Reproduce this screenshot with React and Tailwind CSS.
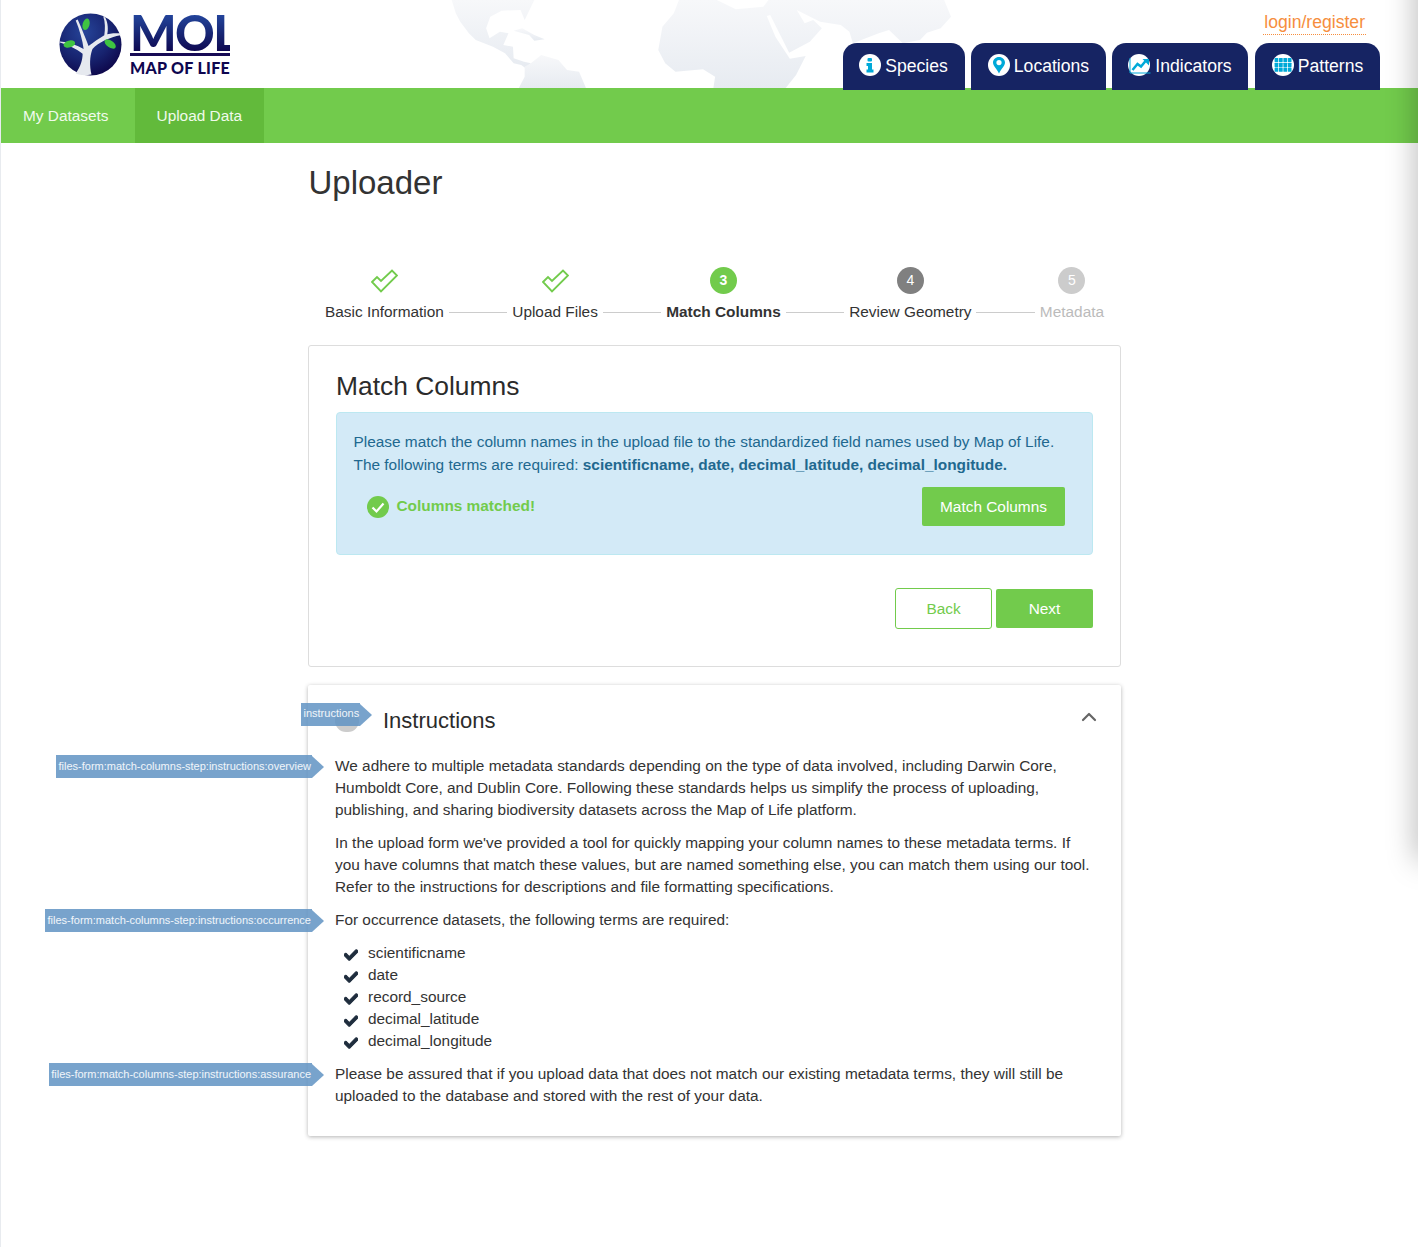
import { Fragment } from "react";
import { ChevronUp } from "lucide-react";
import { FaCheck } from "react-icons/fa";

function WorldMap() {
  return (
    <svg className="absolute left-[430px] top-0 h-[88px] w-[540px]" viewBox="0 0 1568 264" preserveAspectRatio="none">
      <defs>
        <linearGradient id="land" x1="0" y1="0" x2="0" y2="1">
          <stop offset="0" stopColor="#f7f8fa" />
          <stop offset="1" stopColor="#e7ebf1" />
        </linearGradient>
      </defs>
      <g fill="url(#land)">
        <path d="M60 0L72 40L85 65L110 100L130 120L180 140L215 160L240 190L262 195L275 205L290 190L270 185L240 175L238 140L210 135L225 100L200 95L170 115L160 85L172 50L205 32L260 30L272 60L300 0Z" />
        <path d="M240 92L265 85L300 105L330 118L300 122L285 105Z" />
        <path d="M255 264L272 230L272 200L290 190L320 165L370 180L395 210L430 215L450 264Z" />
        <path d="M720 0L705 40L672 80L660 150L680 190L710 215L790 208L825 230L820 264L1030 264L1060 225L1088 168L1042 176L1000 110L975 48L985 45L1040 158L1100 125L1135 85L1110 60L1085 70L1062 30L1130 65L1190 75L1215 95L1225 130L1300 100L1330 90L1370 130L1420 120L1440 98L1480 85L1510 50L1490 0L980 0L965 20L885 28L830 0Z" />
      </g>
    </svg>
  );
}

function Logo() {
  return (
    <div className="flex items-start gap-[8px]">
      <svg width="63" height="63" viewBox="0 0 64 63" className="shrink-0">
        <defs>
          <radialGradient id="globe" cx="0.4" cy="0.3" r="0.75">
            <stop offset="0" stopColor="#264499" />
            <stop offset="0.6" stopColor="#17236f" />
            <stop offset="1" stopColor="#0d0548" />
          </radialGradient>
        </defs>
        <circle cx="32" cy="31.500" r="31.500" fill="url(#globe)" />
        <path d="M17 61C22 54 24 47 24 41C18 36 9 32 1 29.500L1 28.500C10 29 18 32 25 36C24 27 21 17 17 7L19 6C23 15 27 25 30 33C35 29 41 25 46 22C47 16 47 9 45 3L47 4C50 10 50 17 49 21C53 20 57 20 62 20L62.500 22C52 24 40 29 34 36C31 44 31 53 33 62C27 63 22 63 17 61Z" fill="#e6e9ef" />
        <ellipse cx="27.500" cy="11" rx="3.500" ry="6" transform="rotate(15 27.500 11)" fill="#3fc441" />
        <ellipse cx="10.500" cy="31" rx="6" ry="3.500" transform="rotate(-15 10.500 31)" fill="#3fc441" />
        <ellipse cx="52" cy="31" rx="6.500" ry="3.500" transform="rotate(35 52 31)" fill="#3fc441" />
      </svg>
      <div className="w-[100px] font-['Lato',sans-serif]">
        <div className="h-[39px] bg-gradient-to-b from-[#24479f] to-[#0e0650] bg-clip-text text-[49px] leading-[39px] font-black tracking-[-1.500px] whitespace-nowrap text-transparent">
          MOL
        </div>
        <div className="mt-[1px] h-[3px] bg-[#170b55]" />
        <div className="mt-[3px] text-[16px] leading-[17px] font-black tracking-[0.3px] whitespace-nowrap text-[#0e0650]">
          MAP OF LIFE
        </div>
      </div>
    </div>
  );
}

function InfoIcon() {
  return (
    <svg width="22" height="22" viewBox="0 0 22 22">
      <circle cx="11" cy="11" r="11" fill="#fff" />
      <rect x="8.500" y="4" width="4.500" height="3.500" rx="1" fill="#00a9d8" />
      <path d="M7.500 9H13V15.500H14.500V18.500H7.500V15.500H9V12H7.500Z" fill="#00a9d8" />
    </svg>
  );
}

function PinIcon() {
  return (
    <svg width="22" height="22" viewBox="0 0 22 22">
      <circle cx="11" cy="11" r="11" fill="#fff" />
      <path fillRule="evenodd" d="M11 3C7.500 3 5 5.500 5 8.500C5 12 8.800 14.500 11 19.500C13.200 14.500 17 12 17 8.500C17 5.500 14.500 3 11 3ZM11 6A2.600 2.600 0 1 1 11 11.200A2.600 2.600 0 1 1 11 6Z" fill="#00a9d8" />
    </svg>
  );
}

function ChartIcon() {
  return (
    <svg width="23" height="22" viewBox="0 0 23 22">
      <circle cx="11" cy="11" r="11" fill="#fff" />
      <path d="M2 4V19H22.500" fill="none" stroke="#00a9d8" strokeWidth="1" />
      <path d="M4.500 16L9.500 10L13 12.500L18 6.500" fill="none" stroke="#00a9d8" strokeWidth="2.500" />
      <path d="M14.500 5H21V11.500Z" fill="#00a9d8" />
    </svg>
  );
}

function GridIcon() {
  const cells = [];
  for (const y of [4, 8.800, 13.600]) {
    for (const x of [2.600, 7, 11.400, 15.800]) {
      cells.push(<rect key={`${x}-${y}`} x={x} y={y} width="3.700" height="4.100" rx="0.500" fill="#00a9d8" />);
    }
  }
  return (
    <svg width="22" height="22" viewBox="0 0 22 22">
      <circle cx="11" cy="11" r="11" fill="#fff" />
      {cells}
    </svg>
  );
}

const tabs = [
  { label: "Species", icon: <InfoIcon />, className: "w-[122px] pr-px" },
  { label: "Locations", icon: <PinIcon />, className: "w-[135px]" },
  { label: "Indicators", icon: <ChartIcon />, className: "w-[136px]" },
  { label: "Patterns", icon: <GridIcon />, className: "ml-px w-[125px]" },
];

const steps = [
  { label: "Basic Information", done: true },
  { label: "Upload Files", done: true },
  { label: "Match Columns", number: 3, labelClass: "font-bold text-[#333]", circleClass: "bg-[#72cb4c] font-bold" },
  { label: "Review Geometry", number: 4, circleClass: "bg-[#808080]" },
  { label: "Metadata", number: 5, labelClass: "text-[#bbb]", circleClass: "bg-[#ccc]" },
];

function StepCheck() {
  return (
    <svg width="27" height="24" viewBox="0 0 27 24">
      <path d="M1 13L6 8L10 12L21 1.500L26 6.500L10 22.500Z" fill="#fff" stroke="#72cb4c" strokeWidth="1.900" />
    </svg>
  );
}

function Stepper() {
  return (
    <div className="mt-[64px] flex items-end gap-[5px] px-[17px]">
      {steps.map((step, i) => (
        <Fragment key={step.label}>
          {i > 0 && <div className="mb-[7px] h-px flex-1 bg-[#ccc]" />}
          <div className="flex flex-col items-center gap-[9px]">
            <div className="flex h-[27px] items-center justify-center">
              {step.done ? (
                <StepCheck />
              ) : (
                <div className={`flex h-[27px] w-[27px] items-center justify-center rounded-full text-[14px] text-white ${step.circleClass}`}>
                  {step.number}
                </div>
              )}
            </div>
            <div className={`text-[15.400px] leading-[17px] whitespace-nowrap ${step.labelClass || "text-[#333]"}`}>{step.label}</div>
          </div>
        </Fragment>
      ))}
    </div>
  );
}

function Tag({ children, className }) {
  return (
    <div className={`absolute flex h-[23px] items-center ${className}`}>
      <div className="flex h-full items-center bg-[#6093c3]/85 pr-px pb-[2px] pl-[2.500px] text-[11px] whitespace-nowrap text-white/90">{children}</div>
      <div className="h-0 w-0 border-y-[11.500px] border-l-[12px] border-y-transparent border-l-[#6093c3]/85" />
    </div>
  );
}

const requiredTerms = ["scientificname", "date", "record_source", "decimal_latitude", "decimal_longitude"];

export default function App() {
  return (
    <div className="relative h-[1247px] overflow-hidden border-l border-[#e8ebef] bg-white font-['Liberation_Sans',Arial,sans-serif] text-[#333]">
      <WorldMap />

      <header className="relative flex h-[88px] items-start justify-between pt-[13px] pr-[38px] pl-[58px]">
        <Logo />
        <div className="flex flex-col items-end">
          <div className="mt-[-2px] mr-[14px] border-b border-dotted border-[#f68e3d] px-px pb-px text-[17.600px] leading-[22px] text-[#f68e3d]">login/register</div>
          <nav className="relative z-10 mt-[8px] flex gap-[6px]">
            {tabs.map((tab) => (
              <div key={tab.label} className={`flex h-[47px] items-center justify-center gap-[4px] rounded-t-[14px] bg-[#162463] pb-[1px] text-[17.600px] text-white ${tab.className}`}>
                <span className="relative top-[-1px]">{tab.icon}</span>
                <span>{tab.label}</span>
              </div>
            ))}
          </nav>
        </div>
      </header>

      <div className="flex h-[55px] bg-[#72cb4c] pt-px text-[15.400px] text-[#f0faeb]">
        <div className="flex items-center pr-[26px] pl-[22px]">My Datasets</div>
        <div className="mt-[-1px] flex items-center bg-[#62ba3b] px-[22px] pt-px">Upload Data</div>
      </div>

      <main className="ml-[307px] w-[813px]">
        <h1 className="mt-[20px] ml-[0.5px] text-[33px] leading-[40px] font-normal">Uploader</h1>

        <Stepper />

        <section className="mt-[25px] h-[322px] rounded-[3px] border border-[#ddd] px-[27px] pt-[24px]">
          <h2 className="text-[26.400px] leading-[32px] text-[#2b2b2b]">Match Columns</h2>
          <div className="mt-[10px] h-[143px] rounded-[4px] border border-[#bce8f1] bg-[#d3eaf7] px-[16.500px] pt-[17px] text-[15.400px] leading-[23px] text-[#21688f]">
            <p>Please match the column names in the upload file to the standardized field names used by Map of Life.</p>
            <p>
              The following terms are required: <b>scientificname, date, decimal_latitude, decimal_longitude.</b>
            </p>
            <div className="mt-[11px] flex items-center justify-between pr-[10.500px] pl-[13px]">
              <div className="flex items-center gap-[8px] font-bold text-[#72cb4c]">
                <svg width="22" height="22" viewBox="0 0 22 22">
                  <circle cx="11" cy="11" r="11" fill="#72cb4c" />
                  <path d="M5.500 11.500L9.500 15.500L16.500 7.500" fill="none" stroke="#fff" strokeWidth="2.200" />
                </svg>
                <span className="relative top-[-1px]">Columns matched!</span>
              </div>
              <button className="flex h-[39px] w-[143px] items-center justify-center rounded-[2px] bg-[#72cb4c] text-[15.400px] text-white">Match Columns</button>
            </div>
          </div>
          <div className="mt-[33px] flex items-center justify-end gap-[4px]">
            <button className="h-[41px] w-[97px] rounded-[3px] border border-[#72cb4c] bg-white text-[15.400px] text-[#72cb4c]">Back</button>
            <button className="h-[39px] w-[97px] rounded-[2px] bg-[#72cb4c] text-[15.400px] text-white">Next</button>
          </div>
        </section>

        <section className="relative mt-[18px] h-[451px] rounded-[2px] bg-white pt-[18px] pr-[26px] pl-[27px] shadow-[0_1px_4px_rgba(0,0,0,0.3)]">
          <div className="relative flex h-[36px] items-center">
            <div className="h-[22px] w-[24px] rounded-full bg-[#ccc]" />
            <h3 className="ml-[24px] text-[22px] leading-[36px] text-[#2b2b2b]">Instructions</h3>
            <ChevronUp className="absolute top-[2px] right-[-6px] text-[#666]" size={24} strokeWidth={2.200} />
            <Tag className="top-0 left-[-34px]">instructions</Tag>
          </div>

          <div className="mt-[16px] text-[15.400px] leading-[22px]">
            <div className="relative">
              <Tag className="top-0 right-full mr-[11px]">files-form:match-columns-step:instructions:overview</Tag>
              <p>
                We adhere to multiple metadata standards depending on the type of data involved, including Darwin Core, Humboldt Core, and Dublin Core. Following these standards helps us simplify the process of uploading, publishing, and sharing biodiversity datasets across the Map of Life platform.
              </p>
            </div>
            <p className="mt-[11px]">
              In the upload form we've provided a tool for quickly mapping your column names to these metadata terms. If you have columns that match these values, but are named something else, you can match them using our tool. Refer to the instructions for descriptions and file formatting specifications.
            </p>
            <div className="relative mt-[11px]">
              <Tag className="top-0 right-full mr-[11px]">files-form:match-columns-step:instructions:occurrence</Tag>
              <p>For occurrence datasets, the following terms are required:</p>
            </div>
            <ul className="mt-[11px] pl-[9px]">
              {requiredTerms.map((term) => (
                <li key={term} className="flex items-center gap-[10px]">
                  <FaCheck className="relative top-[2px] text-[#1f2d3d]" size={14} stroke="currentColor" strokeWidth={40} />
                  <span>{term}</span>
                </li>
              ))}
            </ul>
            <div className="relative mt-[11px]">
              <Tag className="top-0 right-full mr-[11px]">files-form:match-columns-step:instructions:assurance</Tag>
              <p>Please be assured that if you upload data that does not match our existing metadata terms, they will still be uploaded to the database and stored with the rest of your data.</p>
            </div>
          </div>
        </section>
      </main>

      <div className="pointer-events-none absolute top-[-60px] right-[-20px] h-[920px] w-[20px] shadow-[0_0_30px_rgba(0,0,0,0.35)]" />
    </div>
  );
}
